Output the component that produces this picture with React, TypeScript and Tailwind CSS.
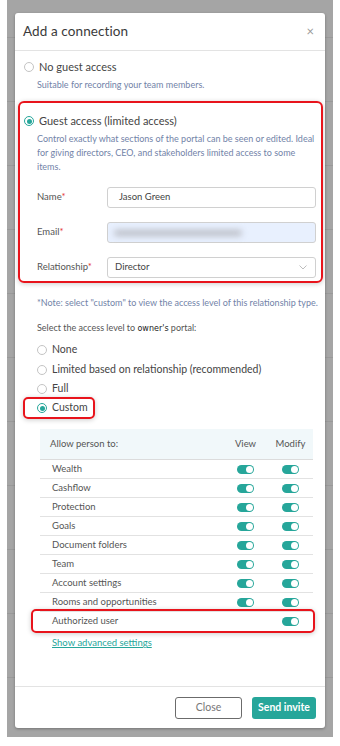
import React from "react";

const teal = "bg-[#26a69a]";

function Radio({ checked = false }: { checked?: boolean }) {
  return checked ? (
    <span className="flex h-[10px] w-[10px] shrink-0 items-center justify-center rounded-full border-[1.5px] border-[#26a69a] bg-white">
      <span className={`h-[5px] w-[5px] rounded-full ${teal}`} />
    </span>
  ) : (
    <span className="h-[10px] w-[10px] shrink-0 rounded-full border border-[#c4c4c4] bg-white" />
  );
}

function Toggle() {
  return (
    <span className={`flex h-[9px] w-[17px] items-center justify-end rounded-full ${teal} pr-[1px]`}>
      <span className="h-[7px] w-[7px] rounded-full bg-white" />
    </span>
  );
}

const rows = [
  "Wealth",
  "Cashflow",
  "Protection",
  "Goals",
  "Document folders",
  "Team",
  "Account settings",
  "Rooms and opportunities",
];

const font = "font-['Lato','Liberation_Sans',sans-serif]";

export default function App() {
  return (
    <div className={`h-[746px] w-[340px] bg-white px-[7px] pb-[9px] ${font}`}>
      <div className="h-[737px] bg-[#a5a5a5] bg-[repeating-linear-gradient(to_bottom,transparent_0px,transparent_37px,#999_37px,#999_38px,transparent_38px,transparent_64px)] px-[8px] pt-[13px]">
        <div className="flex h-[715px] w-[310px] flex-col rounded-[3px] bg-white shadow-[0_1px_3px_rgba(0,0,0,0.3)]">
          {/* header */}
          <div className="flex h-[38px] shrink-0 items-center justify-between border-b border-[#e3e3e3] pl-[8px] pr-[11px]">
            <h2 className="text-[13.5px] tracking-[0.1px] text-[#3a3a3a]">Add a connection</h2>
            <span className="text-[13px] leading-none text-[#9a9a9a]">×</span>
          </div>

          {/* body */}
          <div className="flex-1 text-[#555]">
            <div className="ml-[9px] mt-[9px] flex h-[14px] items-center gap-[5px]">
              <Radio />
              <span className="text-[11px] text-[#444]">No guest access</span>
            </div>
            <p className="ml-[22px] mt-[5px] text-[9px] leading-[12px] text-[#7283a8]">
              Suitable for recording your team members.
            </p>

            <div className="ml-[3px] mr-[2px] mt-[10px] rounded-[6px] border-2 border-[#e8141c] pb-[3px] pt-[11px] shadow-[0_1px_5px_rgba(0,0,0,0.2)]">
              <div className="ml-[4px] flex h-[14px] items-center gap-[5px]">
                <Radio checked />
                <span className="text-[11px] text-[#444]">Guest access (limited access)</span>
              </div>
              <p className="ml-[17px] mr-[3px] mt-[4px] text-[9px] leading-[14px] text-[#7283a8]">
                Control exactly what sections of the portal can be seen or edited. Ideal for giving
                directors, CEO, and stakeholders limited access to some items.
              </p>
              <div className="ml-[17px] mr-[5px] mt-[13px] flex flex-col gap-[14px] text-[9.5px]">
                <div className="flex items-center">
                  <span className="w-[70px]">
                    Name<span className="text-[#e53935]">*</span>
                  </span>
                  <div className="flex h-[21px] flex-1 items-center rounded-[3px] border border-[#d0d0d0] px-[11px] text-[#444]">
                    Jason Green
                  </div>
                </div>
                <div className="flex items-center">
                  <span className="w-[70px]">
                    Email<span className="text-[#e53935]">*</span>
                  </span>
                  <div className="flex h-[21px] flex-1 items-center rounded-[3px] border border-[#d0d0d0] bg-[#e8f0fe] px-[6px]">
                    <span className="h-[6px] w-[128px] rounded-full bg-[#b9bcc4] blur-[3px]" />
                  </div>
                </div>
                <div className="flex items-center">
                  <span className="w-[70px]">
                    Relationship<span className="text-[#e53935]">*</span>
                  </span>
                  <div className="flex h-[21px] flex-1 items-center justify-between rounded-[3px] border border-[#d0d0d0] pl-[7px] pr-[8px] text-[#444]">
                    Director
                    <svg width="8" height="5" viewBox="0 0 8 5" fill="none">
                      <path d="M0.5 0.5L4 4L7.5 0.5" stroke="#b5b5b5" strokeWidth="0.9" />
                    </svg>
                  </div>
                </div>
              </div>
            </div>

            <p className="ml-[22px] mt-[14px] text-[9px] leading-[12px] text-[#7283a8]">
              *Note: select "custom" to view the access level of this relationship type.
            </p>
            <p className="ml-[22px] mt-[13px] text-[9px] leading-[12px] text-[#555]">
              Select the access level to <span className="font-['DejaVu_Sans',sans-serif] text-[8px] text-[#222]">owner's</span> portal:
            </p>

            <div className="ml-[22px] mt-[5px] flex flex-col text-[10.5px] text-[#444]">
              <div className="flex h-[20px] items-center gap-[5px]">
                <Radio />
                None
              </div>
              <div className="flex h-[20px] items-center gap-[5px]">
                <Radio />
                Limited based on relationship (recommended)
              </div>
              <div className="flex h-[17px] items-center gap-[5px]">
                <Radio />
                Full
              </div>
              <div className="-ml-[14px] flex h-[22px] w-[72px] items-center gap-[5px] rounded-[5px] border-2 border-[#e8141c] pl-[12px] shadow-[0_1px_5px_rgba(0,0,0,0.2)]">
                <Radio checked />
                Custom
              </div>
            </div>

            {/* permissions table */}
            <div className="ml-[25px] mr-[12px] mt-[10px] text-[9.5px] text-[#555]">
              <div className="flex h-[31px] items-center border-b border-[#dcdcdc] bg-[#f1f8fa] pl-[10px]">
                <span className="flex-1">Allow person to:</span>
                <span className="w-[45px] text-center">View</span>
                <span className="w-[45px] text-center">Modify</span>
              </div>
              {rows.map((r) => (
                <div key={r} className="flex h-[19px] items-center border-b border-[#e2e2e2] pl-[12px]">
                  <span className="flex-1">{r}</span>
                  <span className="flex w-[45px] justify-center">
                    <Toggle />
                  </span>
                  <span className="flex w-[45px] justify-center">
                    <Toggle />
                  </span>
                </div>
              ))}
              <div className="relative flex h-[19px] items-center pl-[12px]">
                <span className="flex-1">Authorized user</span>
                <span className="flex w-[45px] justify-center">
                  <Toggle />
                </span>
                <span className="absolute -bottom-[2px] -left-[9px] -right-[2px] -top-[3px] rounded-[5px] border-2 border-[#e8141c] shadow-[0_1px_5px_rgba(0,0,0,0.2)]" />
              </div>
              <a className="ml-[12px] mt-[5px] inline-block text-[9.5px] text-[#26a69a] underline">
                Show advanced settings
              </a>
            </div>
          </div>

          {/* footer */}
          <div className="flex h-[42px] shrink-0 items-center justify-end gap-[10px] border-t border-[#e3e3e3] pr-[9px]">
            <button className="h-[22px] w-[67px] rounded-[3px] border border-[#6b6b6b] text-[10.5px] text-[#777]">
              Close
            </button>
            <button className={`h-[22px] w-[64px] rounded-[3px] ${teal} text-[10.5px] font-bold text-white`}>
              Send invite
            </button>
          </div>
        </div>
      </div>
    </div>
  );
}
